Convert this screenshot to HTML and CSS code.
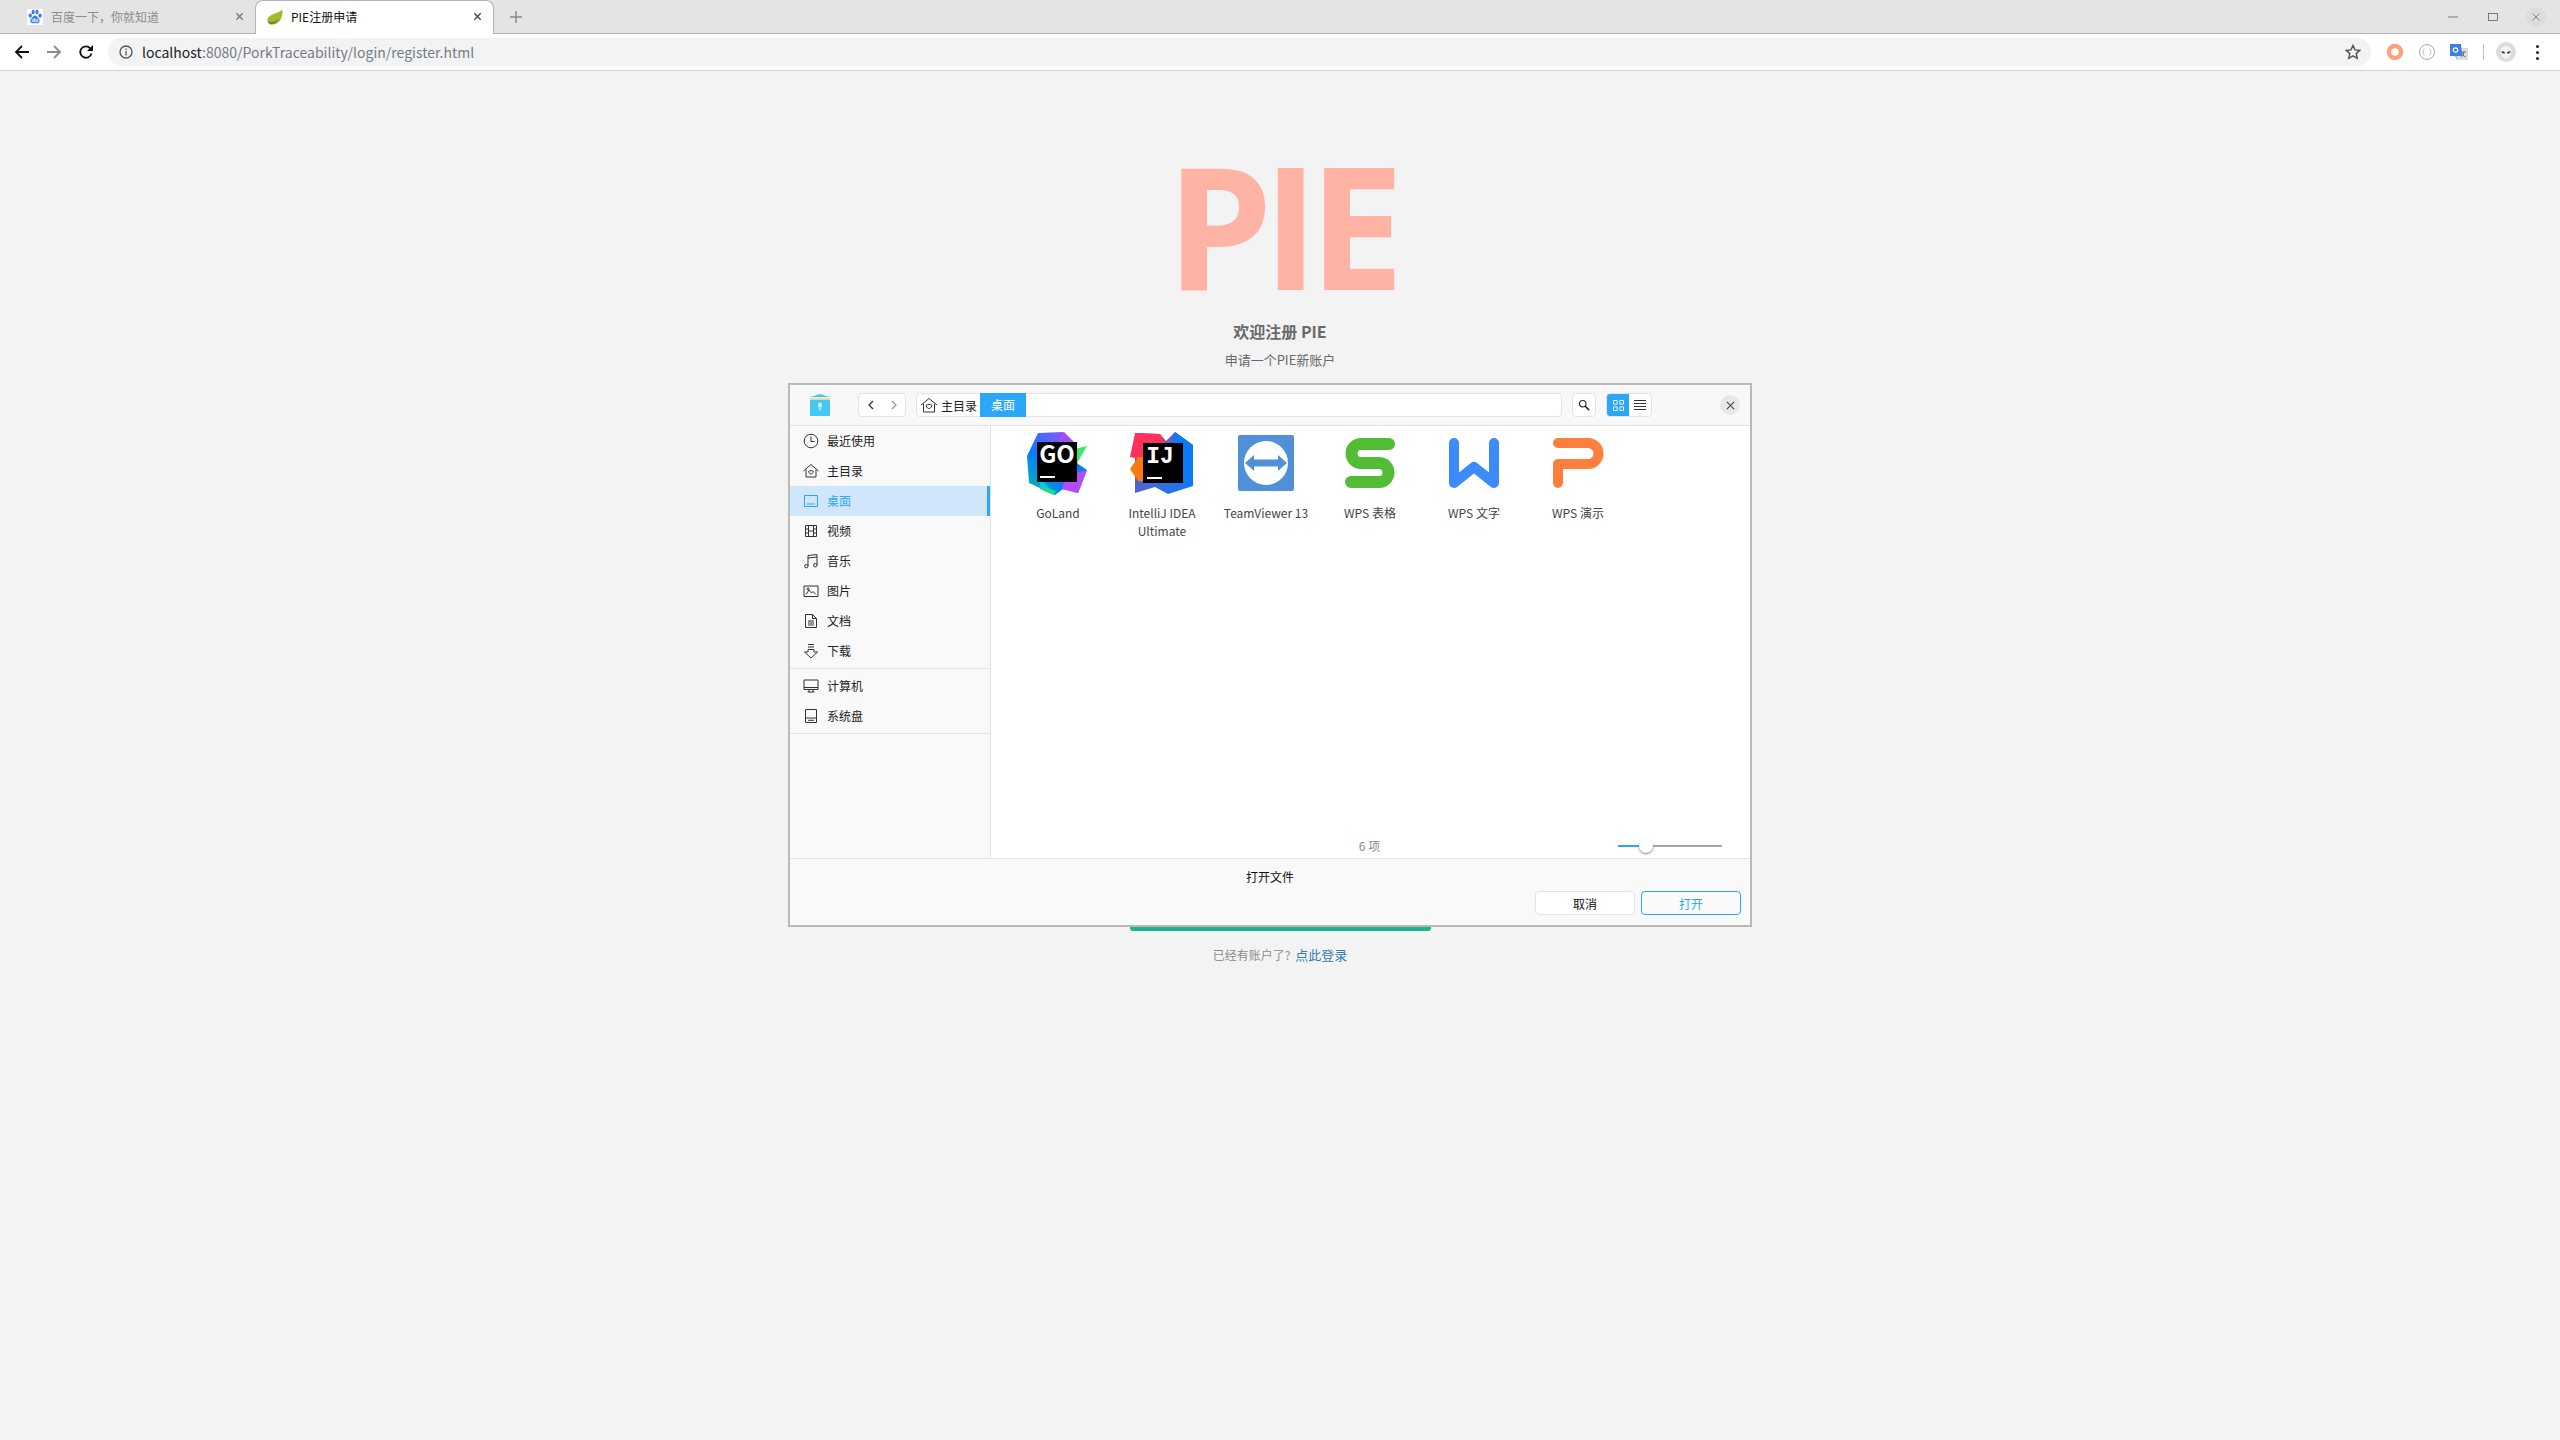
FILE: index.html
```html
<!DOCTYPE html>
<html lang="zh-CN">
  <head>
    <meta charset="utf-8" />
    <title>PIE注册申请</title>
    <link rel="stylesheet" href="styles.css">
  </head>

  <body>
    <div class="browser-tabs">
      <div class="tab">
        <svg class="favicon" viewBox="0 0 16 16">
          <rect width="16" height="16" fill="#fff" />
          <ellipse cx="3.2" cy="6.6" rx="1.7" ry="2.2" fill="#3a7df0" />
          <ellipse cx="6.2" cy="3" rx="1.6" ry="2.3" fill="#3a7df0" />
          <ellipse cx="10" cy="3" rx="1.6" ry="2.3" fill="#3a7df0" />
          <ellipse cx="13" cy="6.6" rx="1.7" ry="2.2" fill="#3a7df0" />
          <path d="M8 6.5c-2 0-2.4 2-3.8 3.2-1.5 1.3-1 4.6 1.6 4.6 1 0 1.4-.4 2.2-.4s1.300.4 2.200.4c2.600 0 3.100-3.300 1.600-4.600C10.400 8.500 10 6.500 8 6.500z" fill="#3a7df0" />
          <text x="8" y="13" class="favicon-du">du</text>
        </svg>
        <span class="tab-title">百度一下，你就知道</span>
        <svg class="tab-close" viewBox="0 0 10 10"><path d="M1.500 1.500l7 7M8.500 1.500l-7 7" /></svg>
      </div>
      <div class="tab tab-active">
        <svg class="favicon" viewBox="0 0 16 16">
          <path d="M15.500 .5C16 8 13 15 6 15.500 2 15.800 .2 13.500 .4 11 .8 5.500 9 5.500 15.500 .5z" fill="#9fbb2e" />
          <path d="M1 12.500c3 1 8 .5 11-3-1.500 4-5 6-8 5.800-1.500-.2-2.500-1.300-3-2.800z" fill="#6c8b1e" />
        </svg>
        <span class="tab-title">PIE注册申请</span>
        <svg class="tab-close" viewBox="0 0 10 10"><path d="M1.500 1.500l7 7M8.500 1.500l-7 7" /></svg>
      </div>
      <svg class="new-tab" viewBox="0 0 12 12"><path d="M6 0v12M0 6h12" /></svg>
      <div class="window-btns">
        <svg class="win-btn" viewBox="0 0 20 20"><path d="M0 10h20" /></svg>
        <svg class="win-btn" viewBox="0 0 20 20"><rect x="1" y="3" width="18" height="14" /></svg>
        <div class="win-close">
          <svg viewBox="0 0 20 20"><path d="M3 3l14 14M17 3L3 17" /></svg>
        </div>
      </div>
    </div>

    <div class="browser-bar">
      <svg class="nav-icon" viewBox="0 0 16 16"><path d="M15 8H2M8 2L2 8l6 6" /></svg>
      <svg class="nav-icon nav-off" viewBox="0 0 16 16"><path d="M1 8h13M8 2l6 6-6 6" /></svg>
      <svg class="nav-icon" viewBox="0 0 16 16"><path d="M13.500 9.500a5.700 5.700 0 1 1-1.200-5.200" /><path class="nav-fill" d="M15 1v6H9z" /></svg>
      <div class="omnibox">
        <svg class="info-icon" viewBox="0 0 14 14">
          <circle cx="7" cy="7" r="6" />
          <path d="M7 6v4.500M7 3.500v1.500" />
        </svg>
        <span class="url"><b>localhost</b>:8080/PorkTraceability/login/register.html</span>
        <svg class="star" viewBox="0 0 16 16"><path d="M8 1.500l2 4.400 4.800.5-3.600 3.200 1 4.700L8 11.900l-4.200 2.400 1-4.700L1.200 6.400 6 5.900z" /></svg>
      </div>
      <div class="ext-icons">
        <svg class="ext" viewBox="0 0 18 18"><circle cx="9" cy="9" r="6" fill="none" stroke="#ffa17e" stroke-width="4.500" /></svg>
        <svg class="ext" viewBox="0 0 18 18">
          <circle cx="9" cy="9" r="7.500" fill="none" stroke="#aaa" />
          <path d="M6.500 6C5 6 6 9 4.800 9 6 9 5 12 6.500 12M11.500 6c1.500 0 .5 3 1.700 3-1.200 0-.2 3-1.700 3" fill="none" stroke="#aaa" stroke-width=".8" />
        </svg>
        <svg class="ext" viewBox="0 0 18 18">
          <rect x="6" y="5" width="12" height="12" fill="#ddd" />
          <path d="M0 1h11l1 12H6l2 3.500-3-3.500H0z" fill="#3d7de4" />
          <circle cx="5.500" cy="7" r="2.200" fill="none" stroke="#fff" stroke-width="1.200" />
          <path d="M11 9h5M13.500 9c0 3-1 4.500-2 5M12.500 10.500c.5 2 2 3 3 3.500" fill="none" stroke="#666" />
        </svg>
        <div class="ext-sep"></div>
        <svg class="avatar" viewBox="0 0 20 20">
          <circle cx="10" cy="10" r="10" fill="#dcdcdc" />
          <path d="M5 7c2-4 8-4 10 0 1 4-2 10-5 10S4 11 5 7z" fill="#f4f4f4" />
          <path d="M5.500 9.500c2-.5 3.300.5 3.500 2-2 .2-3.200-.5-3.500-2zM14.500 9.500c-2-.5-3.300.5-3.500 2 2 .2 3.200-.5 3.500-2z" fill="#333" />
        </svg>
        <div class="menu-dots"><i></i><i></i><i></i></div>
      </div>
    </div>

    <div class="register-page">
      <h1 class="logo-name">PIE</h1>
      <h3 class="welcome">欢迎注册 PIE</h3>
      <p class="hint">申请一个PIE新账户</p>
      <div class="form-btn"></div>
      <p class="login-link"><small>已经有账户了?</small> <a href="#">点此登录</a></p>
    </div>

    <div class="file-dialog">
      <div class="dialog-head">
        <svg class="app-icon" viewBox="0 0 20 22">
          <path d="M0 3l10-3 10 3v19H0z" fill="#45c8f5" />
          <rect y="3" width="20" height="3" fill="#dff6ff" />
          <rect y="4.500" width="20" height="1.500" fill="#f5d672" />
          <path d="M10 8.500a2 2 0 0 1 2 2V13h-1.300v3.500H9.300V13H8v-2.500a2 2 0 0 1 2-2z" fill="#c9f1ff" />
        </svg>
        <div class="nav-group">
          <svg viewBox="0 0 8 12"><path d="M6 2L2 6l4 4" /></svg>
          <svg class="nav-next" viewBox="0 0 8 12"><path d="M2 2l4 4-4 4" /></svg>
        </div>
        <div class="crumbs">
          <svg class="crumb-home" viewBox="0 0 18 16">
            <path d="M1 8l8-6.500L17 8M3.500 6.500V15h11V6.500M6 8.500c2-1.500 4-1.500 6 0-1 2.500-2 3-3 3s-2-.5-3-3z" />
          </svg>
          <span class="crumb-text">主目录</span>
          <span class="crumb-cur">桌面</span>
        </div>
        <button class="icon-btn">
          <svg viewBox="0 0 14 14"><circle cx="5.500" cy="5.500" r="3.800" /><path class="thick" d="M8.500 8.500L13 13" /></svg>
        </button>
        <div class="view-group">
          <div class="view-on">
            <svg viewBox="0 0 12 12"><path d="M.5.500h4v4h-4zM7.500.500h4v4h-4zM.5 7.500h4v4h-4zM7.500 7.500h4v4h-4z" /></svg>
          </div>
          <div class="view-off">
            <svg viewBox="0 0 12 10"><path d="M0 .5h12M0 3.500h12M0 6.500h12M0 9.500h12" /></svg>
          </div>
        </div>
        <div class="dialog-close">
          <svg viewBox="0 0 10 10"><path d="M1 1l8 8M9 1L1 9" /></svg>
        </div>
      </div>

      <div class="dialog-body">
        <ul class="side">
          <li class="side-group">
            <div class="side-row">
              <svg viewBox="0 0 16 16"><circle cx="8" cy="8" r="6.800" /><path d="M8 3.500V8.500h3.500" /></svg>最近使用
            </div>
            <div class="side-row">
              <svg viewBox="0 0 16 16"><path d="M.5 8L8 1.500 15.500 8M3 6.500V14h10V6.500M5.500 8.500c1.700-1.200 3.300-1.200 5 0-.8 2-1.700 2.500-2.500 2.500s-1.700-.5-2.500-2.500z" /></svg>主目录
            </div>
            <div class="side-row side-active">
              <svg viewBox="0 0 16 16"><path d="M1.500 2.500h13v11h-13zM4 11h8" /></svg>桌面
            </div>
            <div class="side-row">
              <svg viewBox="0 0 16 16"><path d="M2.500 2.500h11v11h-11zM5.500 2.500v11M10.500 2.500v11M2.500 6h3M2.500 10h3M10.500 6h3M10.500 10h3M5.500 8h5" /></svg>视频
            </div>
            <div class="side-row">
              <svg viewBox="0 0 16 16"><path d="M5 13V2.500l9-1V12M5 5l9-1" /><circle cx="3.300" cy="13.200" r="1.700" /><circle cx="12.300" cy="12.200" r="1.700" /></svg>音乐
            </div>
            <div class="side-row">
              <svg viewBox="0 0 16 16"><path d="M1 3h14v10.500H1zM3 11.500l3-4.500 2.500 3 1.500-1.500 3 3" /><circle cx="5" cy="5.800" r="1" /></svg>图片
            </div>
            <div class="side-row">
              <svg viewBox="0 0 16 16"><path d="M2.500 1.500h7l4 4v9h-11zM9.500 1.500v4h4M5 8h6M5 10h6M5 12h6" /></svg>文档
            </div>
            <div class="side-row">
              <svg viewBox="0 0 16 16"><path d="M5 1.500h6M5 4h6M5 6.500V9H1.500L8 15l6.500-6H11V6.500z" /></svg>下载
            </div>
          </li>
          <li class="side-group">
            <div class="side-row">
              <svg viewBox="0 0 16 16"><path d="M1 2h14v9.500H1zM1 9.500h14M6 11.500V14M10 11.500V14M4.500 14h7" /></svg>计算机
            </div>
            <div class="side-row">
              <svg viewBox="0 0 16 16"><path d="M2.500 1.500h11v13h-11zM2.500 10h11M5 12.300h6" /></svg>系统盘
            </div>
          </li>
        </ul>

        <div class="files">
          <div class="file-grid">
            <div class="file">
              <svg class="file-icon" viewBox="0 0 64 64">
                <defs>
                  <linearGradient id="goA" x1="0" y1="1" x2="1" y2="0">
                    <stop offset="0" stop-color="#07c3a2" />
                    <stop offset=".4" stop-color="#087cfa" />
                    <stop offset="1" stop-color="#b74af7" />
                  </linearGradient>
                  <linearGradient id="ijA" x1="0" y1="0" x2="1" y2="1">
                    <stop offset="0" stop-color="#8d4fa8" />
                    <stop offset="1" stop-color="#087cfa" />
                  </linearGradient>
                </defs>
                <path d="M12 2L37 1 51 15V55L37 58 29 64 3 52 1 25z" fill="url(#goA)" />
                <path d="M38 1L52 15H28z" fill="#a34df5" />
                <path d="M48 18L61 15 50 34z" fill="#3bea62" />
                <path d="M48 30L61 39 52 62 36 58z" fill="#087cfa" />
                <path d="M40 45L61 39 52 62 36 58z" fill="#b74af7" />
                <path d="M14 46L29 64 14 58z" fill="#07c3f2" />
                <path d="M14 54L30 60 28 64 18 60z" fill="#21d789" />
                <rect x="11" y="11" width="40" height="40" fill="#000" />
                <text x="31" y="32" class="logo-text">GO</text>
                <rect x="14" y="45" width="15" height="2" fill="#fff" />
              </svg>
              <span class="file-name">GoLand</span>
            </div>
            <div class="file">
              <svg class="file-icon" viewBox="0 0 64 64">
                <path d="M5 2L30 3 36 10 45 1 63 14 63 55 38 63 25 56 5 62z" fill="url(#ijA)" />
                <path d="M45 1L63 14V55L38 40z" fill="#087cfa" />
                <path d="M5 2L30 3 35 10 20 30 0 26z" fill="#fe315d" />
                <path d="M0 38L8 26H20V50H8z" fill="#f97a12" />
                <rect x="13" y="12" width="40" height="40" fill="#000" />
                <text x="30" y="32" class="logo-text logo-mono">IJ</text>
                <rect x="17" y="46" width="15" height="2" fill="#fff" />
              </svg>
              <span class="file-name">IntelliJ IDEA Ultimate</span>
            </div>
            <div class="file">
              <svg class="file-icon" viewBox="0 0 64 64">
                <rect x="4" y="4" width="56" height="56" rx="2" fill="#4f90d8" />
                <circle cx="32" cy="32" r="22" fill="#fff" />
                <path d="M11 32l9-8v4.500h24V24l9 8-9 8v-4.500H20V40z" fill="#4f90d8" />
              </svg>
              <span class="file-name">TeamViewer 13</span>
            </div>
            <div class="file">
              <svg class="file-icon wps" viewBox="0 0 64 64">
                <path stroke="#52bc35" stroke-width="12" d="M51 13H23a9.500 9.500 0 0 0 0 19H41a9.500 9.500 0 0 1 0 19H13" />
              </svg>
              <span class="file-name">WPS 表格</span>
            </div>
            <div class="file">
              <svg class="file-icon wps" viewBox="0 0 64 64">
                <path stroke="#3c8bf9" stroke-width="10" d="M12 12V52L32 36 52 52V12" />
              </svg>
              <span class="file-name">WPS 文字</span>
            </div>
            <div class="file">
              <svg class="file-icon wps" viewBox="0 0 64 64">
                <path stroke="#fc7f3d" stroke-width="10" d="M12 12H42a10.500 10.500 0 0 1 0 21H12V52" />
              </svg>
              <span class="file-name">WPS 演示</span>
            </div>
          </div>
          <div class="status">
            <span class="status-count">6 项</span>
            <div class="slider">
              <i class="slider-done"></i>
              <i class="slider-knob"></i>
            </div>
          </div>
        </div>
      </div>

      <div class="dialog-foot">
        <div class="foot-title">打开文件</div>
        <div class="foot-btns">
          <button class="btn">取消</button>
          <button class="btn btn-main">打开</button>
        </div>
      </div>
    </div>
  </body>
</html>
```

FILE: styles.css
```css
* {
  box-sizing: border-box;
}

body {
  margin: 0;
  height: 1440px;
  overflow: hidden;
  position: relative;
  background-color: #f3f3f3;
  font-family: "Noto Sans CJK SC", "Noto Sans", sans-serif;
  font-size: 12px;
  color: #333;
}

/*=============== browser ===============*/

.browser-tabs {
  height: 34px;
  display: flex;
  align-items: flex-end;
  padding-left: 15px;
  background-color: #e4e4e4;
  border-bottom: 1px solid #b4b4b4;
}

.tab {
  width: 240px;
  height: 33px;
  margin-bottom: -1px;
  padding-bottom: 2px;
  display: flex;
  align-items: center;
  padding-left: 12px;
  padding-right: 11px;
  color: #8c8c8c;
}

.tab-active {
  width: 239px;
  height: 34px;
  padding-left: 11px;
  padding-right: 11px;
  color: #111;
  background-color: #fff;
  border: 1px solid #b4b4b4;
  border-bottom: none;
  border-radius: 8px 8px 0 0;
}

.favicon {
  width: 16px;
  height: 16px;
  flex: none;
}

.favicon-du {
  font-size: 5px;
  font-weight: 700;
  fill: #fff;
  text-anchor: middle;
}

.tab-title {
  flex: 1;
  margin-left: 8px;
  line-height: 18px;
}

.tab-close {
  width: 9px;
  height: 9px;
  flex: none;
  fill: none;
  stroke: #777;
  stroke-width: 1.500;
}

.tab-active .tab-close {
  stroke: #444;
}

.new-tab {
  width: 12px;
  height: 12px;
  margin: 0 0 10px 16px;
  fill: none;
  stroke: #8a8a8a;
  stroke-width: 1.500;
}

.window-btns {
  margin-left: auto;
  height: 33px;
  display: flex;
  align-items: center;
  padding-right: 14px;
}

.win-btn {
  width: 10px;
  height: 10px;
  margin-right: 30px;
  fill: none;
  stroke: #555;
  stroke-width: 1.500;
}

.win-close {
  width: 20px;
  height: 20px;
  margin-left: -2px;
  border-radius: 50%;
  background-color: #dcdcdc;
  display: flex;
  align-items: center;
  justify-content: center;
}

.win-close svg {
  width: 10px;
  height: 10px;
  fill: none;
  stroke: #666;
  stroke-width: 1.500;
}

.browser-bar {
  height: 37px;
  display: flex;
  align-items: center;
  padding-left: 14px;
  background-color: #fff;
  border-bottom: 1px solid #d4d4d4;
}

.nav-icon {
  width: 16px;
  height: 16px;
  margin-right: 16px;
  flex: none;
  fill: none;
  stroke: #111;
  stroke-width: 1.800;
}

.nav-off {
  stroke: #8c8c8c;
}

.nav-fill {
  fill: #111;
  stroke: none;
}

.omnibox {
  width: 2263px;
  height: 28px;
  margin-left: -2px;
  flex: none;
  display: flex;
  align-items: center;
  padding: 0 10px 0 11px;
  border-radius: 14px;
  background-color: #f1f3f4;
}

.info-icon {
  width: 14px;
  height: 14px;
  flex: none;
  fill: none;
  stroke: #555;
  stroke-width: 1.300;
}

.url {
  flex: 1;
  margin-left: 9px;
  font-size: 14px;
  color: #777b80;
}

.url b {
  font-weight: 400;
  color: #222;
}

.star {
  width: 16px;
  height: 16px;
  fill: none;
  stroke: #555;
  stroke-width: 1.500;
}

.ext-icons {
  display: flex;
  align-items: center;
  margin-left: 15px;
}

.ext {
  width: 18px;
  height: 18px;
  margin-right: 14px;
  flex: none;
}

.ext-sep {
  width: 1px;
  height: 16px;
  margin: 0 12px 0 1px;
  background-color: #c4c4c4;
}

.avatar {
  width: 20px;
  height: 20px;
  flex: none;
}

.menu-dots {
  margin-left: 20px;
  display: flex;
  flex-direction: column;
  gap: 3px;
}

.menu-dots i {
  width: 3px;
  height: 3px;
  border-radius: 50%;
  background-color: #222;
}

/*=============== register page ===============*/

.register-page {
  display: flex;
  flex-direction: column;
  align-items: center;
  color: #676a6c;
}

.logo-name {
  margin: 58px 0 0;
  font-family: "Open Sans", sans-serif;
  font-size: 170px;
  font-weight: 700;
  line-height: 190px;
  letter-spacing: -10px;
  color: #ffb3a4;
}

.welcome {
  margin: 1px 0 0;
  font-size: 16px;
  font-weight: 600;
  line-height: 22px;
}

.hint {
  margin: 8px 0 0;
  font-size: 13px;
  line-height: 20px;
}

.form-btn {
  width: 301px;
  height: 34px;
  margin-top: 527px;
  border-radius: 3px;
  background-color: #1ab394;
}

.login-link {
  margin: 14px 0 0;
  font-size: 13px;
  line-height: 20px;
  color: #8d8d8d;
}

.login-link small {
  font-size: 12px;
  margin-right: 2px;
}

.login-link a {
  color: #337ab7;
  text-decoration: none;
}

/*=============== file dialog ===============*/

.file-dialog {
  position: absolute;
  left: 788px;
  top: 383px;
  width: 964px;
  height: 544px;
  display: flex;
  flex-direction: column;
  border: 2px solid #b9b9b9;
  background-color: #fff;
}

.dialog-head {
  height: 41px;
  flex: none;
  display: flex;
  align-items: center;
  padding-left: 20px;
  background-color: #f8f8f8;
  border-bottom: 1px solid #e3e3e3;
}

.app-icon {
  width: 20px;
  height: 22px;
  flex: none;
}

.nav-group {
  width: 48px;
  height: 24px;
  margin-left: 28px;
  display: flex;
  align-items: center;
  justify-content: center;
  gap: 15px;
  background-color: #fff;
  border: 1px solid #e3e3e3;
  border-radius: 4px;
}

.nav-group svg {
  width: 8px;
  height: 12px;
  fill: none;
  stroke: #333;
  stroke-width: 1.300;
}

.nav-group .nav-next {
  stroke: #999;
}

.crumbs {
  width: 646px;
  height: 24px;
  margin-left: 10px;
  display: flex;
  align-items: center;
  padding-left: 3px;
  background-color: #fff;
  border: 1px solid #e3e3e3;
  border-radius: 4px;
}

.crumb-home {
  width: 18px;
  height: 16px;
  fill: none;
  stroke: #333;
}

.crumb-text {
  margin-left: 3px;
  color: #222;
}

.crumb-cur {
  width: 46px;
  height: 24px;
  margin-left: 3px;
  flex: none;
  text-align: center;
  line-height: 24px;
  color: #fff;
  background-color: #2ca7f8;
}

.icon-btn {
  width: 24px;
  height: 24px;
  margin-left: 10px;
  padding: 0;
  display: flex;
  align-items: center;
  justify-content: center;
  background-color: #fff;
  border: 1px solid #e3e3e3;
  border-radius: 4px;
}

.icon-btn svg {
  width: 12px;
  height: 12px;
  fill: none;
  stroke: #222;
  stroke-width: 1.300;
}

.icon-btn .thick {
  stroke-width: 1.800;
}

.view-group {
  width: 46px;
  height: 24px;
  margin-left: 10px;
  display: flex;
  background-color: #fff;
  border: 1px solid #e3e3e3;
  border-radius: 4px;
  overflow: hidden;
}

.view-on,
.view-off {
  width: 22px;
  display: flex;
  align-items: center;
  justify-content: center;
}

.view-on {
  background-color: #2ca7f8;
}

.view-on svg {
  width: 11px;
  height: 11px;
  fill: none;
  stroke: #fff;
}

.view-off svg {
  width: 12px;
  height: 10px;
  fill: none;
  stroke: #333;
}

.dialog-close {
  width: 20px;
  height: 20px;
  margin-left: 68px;
  border-radius: 50%;
  background-color: #e8e8e8;
  display: flex;
  align-items: center;
  justify-content: center;
}

.dialog-close svg {
  width: 9px;
  height: 9px;
  fill: none;
  stroke: #444;
  stroke-width: 1.200;
}

.dialog-body {
  flex: 1;
  display: flex;
  min-height: 0;
}

.side {
  width: 201px;
  flex: none;
  margin: 0;
  padding: 0;
  list-style: none;
  background-color: #f9f9f9;
  border-right: 1px solid #e3e3e3;
}

.side-group {
  padding-bottom: 2px;
  border-bottom: 1px solid #e3e3e3;
}

.side-group + .side-group {
  padding-top: 2px;
}

.side-row {
  height: 30px;
  display: flex;
  align-items: center;
  padding-left: 13px;
  color: #222;
  line-height: 18px;
}

.side-row svg {
  width: 16px;
  height: 16px;
  margin-right: 8px;
  flex: none;
  fill: none;
  stroke: #333;
}

.side-active {
  color: #2ca7f8;
  background-color: #cfe6fb;
  border-right: 3px solid #2ca7f8;
}

.side-active svg {
  stroke: #2ca7f8;
}

.files {
  flex: 1;
  display: flex;
  flex-direction: column;
  padding-left: 15px;
}

.file-grid {
  flex: 1;
  display: grid;
  grid-template-columns: repeat(6, 104px);
  align-content: start;
  padding-top: 5px;
}

.file {
  display: flex;
  flex-direction: column;
  align-items: center;
  text-align: center;
}

.file-icon {
  width: 64px;
  height: 64px;
  flex: none;
}

.logo-text {
  font-size: 24px;
  font-weight: 700;
  fill: #fff;
  text-anchor: middle;
}

.logo-mono {
  font-family: "Liberation Mono", monospace;
  font-size: 23px;
}

.wps path {
  fill: none;
  stroke-linecap: round;
  stroke-linejoin: round;
}

.file-name {
  width: 100px;
  margin-top: 9px;
  line-height: 18px;
  color: #444;
}

.status {
  height: 24px;
  margin: 0 0 0 -17px;
  position: relative;
  text-align: center;
  line-height: 24px;
  color: #8a8a8a;
}

.status-count {
  display: block;
}

.slider {
  position: absolute;
  left: 629px;
  top: 11px;
  width: 104px;
  height: 2px;
  background-color: #a6a6a6;
}

.slider-done {
  display: block;
  width: 22px;
  height: 2px;
  background-color: #2ca7f8;
}

.slider-knob {
  position: absolute;
  left: 21px;
  top: -6px;
  width: 14px;
  height: 14px;
  border-radius: 50%;
  background-color: #fff;
  box-shadow: 0 1px 2px rgba(0, 0, 0, 0.5);
}

.dialog-foot {
  height: 67px;
  flex: none;
  display: flex;
  flex-direction: column;
  background-color: #f9f9f9;
  border-top: 1px solid #e3e3e3;
}

.foot-title {
  height: 32px;
  padding-top: 9px;
  text-align: center;
  line-height: 18px;
  color: #111;
}

.foot-btns {
  display: flex;
  justify-content: flex-end;
  gap: 6px;
  padding-right: 9px;
}

.btn {
  width: 100px;
  height: 24px;
  padding: 0;
  font-family: inherit;
  font-size: 12px;
  color: #111;
  background-color: #fff;
  border: 1px solid #e3e3e3;
  border-radius: 4px;
}

.btn-main {
  color: #2ca7f8;
  background-color: #fafafa;
  border-color: #2ca7f8;
}
```
